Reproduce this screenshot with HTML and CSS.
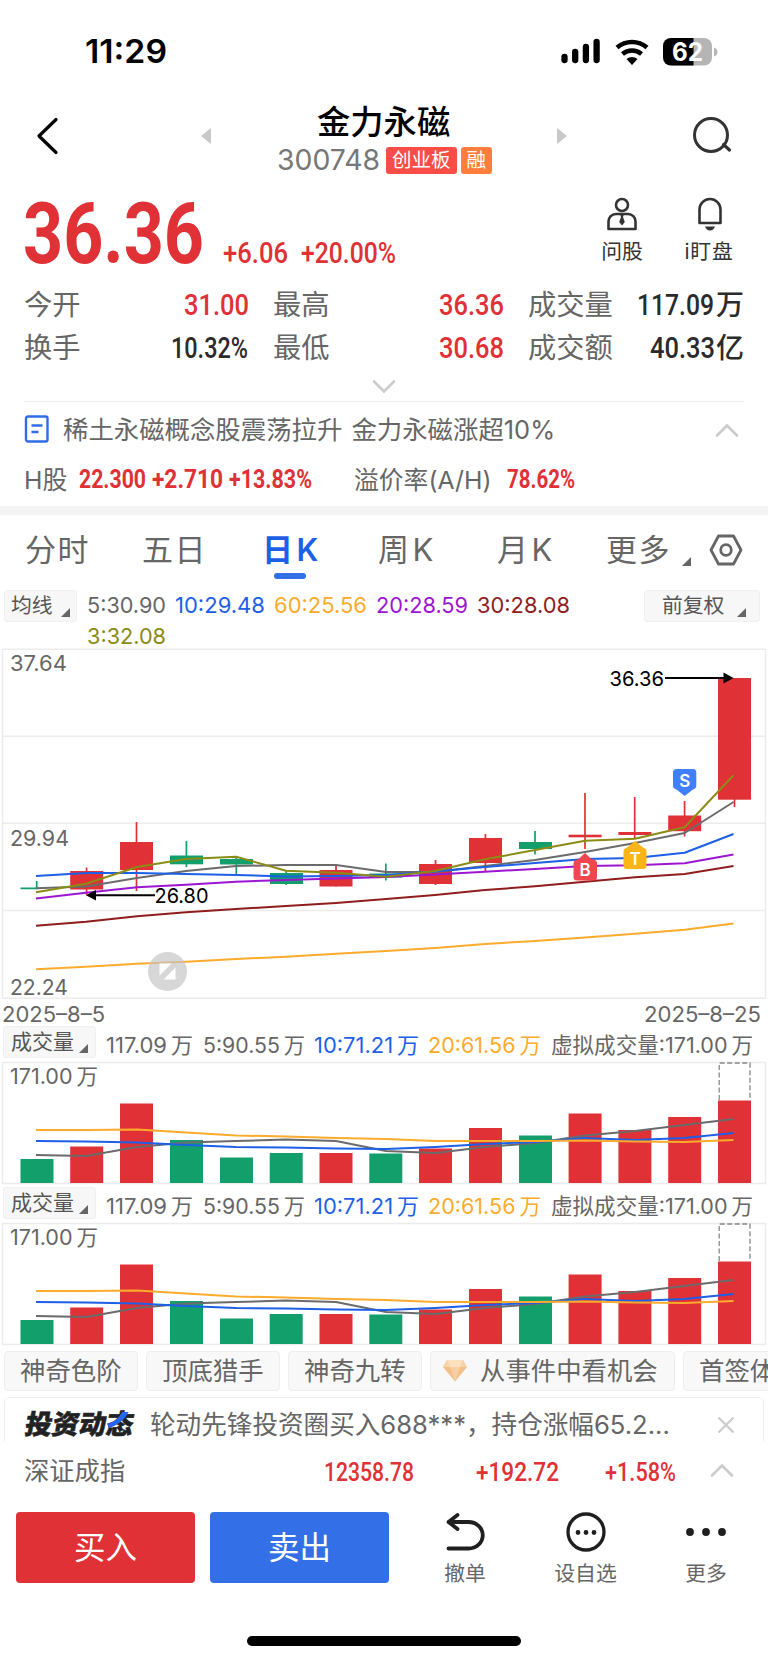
FILE: index.html
```html
<!DOCTYPE html>
<html lang="zh-CN">
<head>
<meta charset="utf-8">
<title>金力永磁 300748</title>
<link rel="stylesheet" href="styles.css">
</head>
<body>
<svg class="defs" width="0" height="0">
  <symbol id="tri" viewBox="0 0 9 9"><path d="M9 0V9H0Z" fill="#666"/></symbol>
  <symbol id="up" viewBox="0 0 24 13"><path d="M2 11.5 12 1.5 22 11.5" fill="none" stroke="#ccc" stroke-width="2.6" stroke-linecap="round"/></symbol>
  <symbol id="volume" viewBox="0 0 768 124" overflow="visible">
    <path d="M2.5 1.5H765.5V122.5H2.5Z" fill="none" stroke="#ececec" stroke-width="1.5"/>
    <g fill="#139f6c"><path d="M20.5 98h33v24h-33zM170 79h33v43h-33zM220 96.500h33v25.500h-33zM269.700 92h33v30h-33zM369.300 92.500h33v29.500h-33zM519 74.500h33v47.500h-33z"/></g>
    <g fill="#e03136"><path d="M70.200 85.500h33v36.500h-33zM120 42.500h33v79.500h-33zM319.500 92h33v30h-33zM419 87.500h33v34.500h-33zM469 67h33v55h-33zM568.600 52.500h33v69.500h-33zM618.400 69h33v53h-33zM668.200 56h33v66h-33zM718 39.500h33v82.500h-33z"/></g>
    <path d="M719.200 39V2H750V39" fill="none" stroke="#888" stroke-width="1.3" stroke-dasharray="5 2.500"/>
    <g fill="none" stroke-width="2" stroke-linejoin="round">
      <path stroke="#6b6b6b" d="M36 94 86 95 137 86 186 81.500 236 80 286 78.500 336 80 386 90 435.500 92 485 86 535 82 585 74.500 635 70 684 64 733.500 58"/>
      <path stroke="#1d5fe6" d="M36 80 86 80.500 137 81.500 186 84 236 86 286 86.500 336 87.500 386 88 435.500 86 485 83 535 81 585 77 635 79 684 77 733.500 72"/>
      <path stroke="#fcab2c" d="M36 69 86 69 137 68.500 186 71.500 236 74.500 286 75.500 336 77 386 78 435.500 80 485 80 535 80 585 79.500 635 80.500 684 81 733.500 79"/>
    </g>
  </symbol>
</svg>
<main class="app">
  <header class="status">
    <svg class="num inter w600 black" width="82" height="30"><text y="26" font-size="33" textLength="82" lengthAdjust="spacingAndGlyphs">11:29</text></svg>
    <svg class="status-icons" width="158" height="30" viewBox="0 0 158 30">
      <path d="M3.500 20v3M14.200 15v8M24.900 10v13M35.600 5v18" stroke="#000" stroke-width="6.300" stroke-linecap="round"/>
      <path d="M56 10.500a23 23 0 0 1 30 0M61.500 17a14.500 14.500 0 0 1 19 0" fill="none" stroke="#000" stroke-width="4.500"/>
      <path d="M65.500 22a8.500 8.500 0 0 1 11 0L71 28Z"/>
      <rect x="102" y="1" width="49" height="27.500" rx="8" fill="#b5b5b5"/>
      <path d="M110 1h22.500v27.500H110a8 8 0 0 1-8-8V9a8 8 0 0 1 8-8z"/>
      <path d="M153 10.500q3.500 1.500 3.500 4.500t-3.500 4.500z" fill="#b5b5b5"/>
      <text x="111" y="24" class="inter w700" fill="#fff" font-size="25" textLength="31" lengthAdjust="spacingAndGlyphs">62</text>
    </svg>
  </header>

  <nav class="titlebar">
    <svg class="back" width="24" height="40"><path d="M20 3.500 3 20 20 36.500" fill="none" stroke="#000" stroke-width="3.200" stroke-linecap="round" stroke-linejoin="round"/></svg>
    <svg class="prev" width="10" height="16"><path d="M10 0V16L0 8Z" fill="#c9c9c9"/></svg>
    <div class="title">
      <h1>金力永磁</h1>
      <div class="code-row">
        <svg class="num inter gray" width="103" height="27"><text y="24" font-size="28.500" textLength="103" lengthAdjust="spacingAndGlyphs">300748</text></svg>
        <span class="badge red-bg">创业板</span><span class="badge orange-bg">融</span>
      </div>
    </div>
    <svg class="next" width="10" height="16"><path d="M0 0V16L10 8Z" fill="#c9c9c9"/></svg>
    <svg class="search" width="42" height="40"><circle cx="19" cy="19" r="16.500" fill="none" stroke="#333" stroke-width="3"/><path d="M31.500 28.500 37.500 34" stroke="#333" stroke-width="3.200" stroke-linecap="round"/></svg>
  </nav>

  <section class="quote">
    <svg class="num din w700 price" width="180" height="64"><text y="63" font-size="85.500" textLength="181" lengthAdjust="spacingAndGlyphs">36.36</text></svg>
    <svg class="num din w500 change" width="64" height="24"><text y="23" font-size="29" textLength="65" lengthAdjust="spacingAndGlyphs">+6.06</text></svg>
    <svg class="num din w500 percent" width="94" height="24"><text y="23" font-size="29" textLength="95" lengthAdjust="spacingAndGlyphs">+20.00%</text></svg>
    <div class="tool ask">
      <svg width="32" height="34" viewBox="0 0 32 34"><g fill="none" stroke="#333" stroke-width="2.600"><circle cx="16" cy="8" r="6"/><path d="M10 17H22A7.500 7.500 0 0 1 29.500 24.500V32H2.500V24.500A7.500 7.500 0 0 1 10 17Z" stroke-linejoin="round"/></g><path d="M14 17h4l-1 3 1.800 5L16 28.500 13.200 25 15 20z" fill="#333"/></svg>
      <span>问股</span>
    </div>
    <div class="tool watch">
      <svg width="32" height="34" viewBox="0 0 32 34"><path d="M5.500 26V12.500a10.500 10.500 0 0 1 21 0V26Z" fill="none" stroke="#333" stroke-width="2.600" stroke-linejoin="round"/><path d="M11 29.500h10q-1.500 4-5 4t-5-4" fill="#333"/></svg>
      <span>i盯盘</span>
    </div>
  </section>

  <section class="stats">
    <span>今开</span><svg class="num din w500" width="64" height="24"><text y="20.500" font-size="29" textLength="65" lengthAdjust="spacingAndGlyphs">31.00</text></svg>
    <span>最高</span><svg class="num din w500" width="65" height="24"><text y="20.500" font-size="29" textLength="65" lengthAdjust="spacingAndGlyphs">36.36</text></svg>
    <span>成交量</span><b class="amount"><svg class="num din w500 dark" width="78" height="24"><text y="20.500" font-size="29" textLength="77" lengthAdjust="spacingAndGlyphs">117.09</text></svg>万</b>
    <span>换手</span><svg class="num din w500 dark" width="77" height="24"><text y="20.500" font-size="29" textLength="77" lengthAdjust="spacingAndGlyphs">10.32%</text></svg>
    <span>最低</span><svg class="num din w500" width="65" height="24"><text y="20.500" font-size="29" textLength="65" lengthAdjust="spacingAndGlyphs">30.68</text></svg>
    <span>成交额</span><b class="amount"><svg class="num din w500 dark" width="65" height="24"><text y="20.500" font-size="29" textLength="65" lengthAdjust="spacingAndGlyphs">40.33</text></svg>亿</b>
  </section>
  <div class="expand"><svg class="flip" width="24" height="13"><use href="#up"/></svg></div>

  <section class="news">
    <svg class="doc" width="26" height="28" viewBox="0 0 26 28"><rect x="2" y="1.500" width="21.500" height="25" rx="2" fill="none" stroke="#2f6ee8" stroke-width="2.400"/><path d="M7.500 10.500h11M7.500 17h7" stroke="#2f6ee8" stroke-width="2.400"/></svg>
    <span class="headline">稀土永磁概念股震荡拉升 金力永磁涨超10%</span>
    <svg width="24" height="13"><use href="#up"/></svg>
  </section>
  <section class="hshare">
    <span class="h-label">H股</span>
    <svg class="num din w700" width="67" height="24"><text y="22" font-size="25" textLength="67" lengthAdjust="spacingAndGlyphs">22.300</text></svg>
    <svg class="num din w700" width="71" height="24"><text y="22" font-size="25" textLength="71" lengthAdjust="spacingAndGlyphs">+2.710</text></svg>
    <svg class="num din w700" width="83" height="24"><text y="22" font-size="25" textLength="83" lengthAdjust="spacingAndGlyphs">+13.83%</text></svg>
    <span class="premium">溢价率(A/H)</span>
    <svg class="num din w700" width="68" height="24"><text y="22" font-size="25" textLength="68" lengthAdjust="spacingAndGlyphs">78.62%</text></svg>
  </section>
  <div class="band"></div>

  <nav class="tabs">
    <span>分时</span><span>五日</span><span class="active">日<i>K</i></span><span>周<i>K</i></span><span>月<i>K</i></span><span>更多</span>
    <svg class="more-tri" width="9" height="9"><use href="#tri"/></svg>
    <svg class="gear" width="34" height="32"><path d="M9.500 2H24.500L32 16 24.500 30H9.500L2 16Z" fill="none" stroke="#666" stroke-width="2.800" stroke-linejoin="round"/><circle cx="17" cy="16" r="5.300" fill="none" stroke="#666" stroke-width="2.800"/></svg>
  </nav>

  <section class="averages">
    <button class="pill ma">均线<svg width="9" height="9"><use href="#tri"/></svg></button>
    <div class="ma-values">
      <svg class="num inter" width="79" height="31"><text fill="#666" y="23" font-size="22" textLength="79" lengthAdjust="spacingAndGlyphs">5:30.90</text></svg>
      <svg class="num inter" width="90" height="31"><text fill="#1d5fe6" y="23" font-size="22" textLength="90" lengthAdjust="spacingAndGlyphs">10:29.48</text></svg>
      <svg class="num inter" width="93" height="31"><text fill="#fcab2c" y="23" font-size="22" textLength="93" lengthAdjust="spacingAndGlyphs">60:25.56</text></svg>
      <svg class="num inter" width="92" height="31"><text fill="#9c16d2" y="23" font-size="22" textLength="92" lengthAdjust="spacingAndGlyphs">20:28.59</text></svg>
      <svg class="num inter" width="93" height="31"><text fill="#8f1d1d" y="23" font-size="22" textLength="93" lengthAdjust="spacingAndGlyphs">30:28.08</text></svg>
      <svg class="num inter" width="79" height="31"><text fill="#8b8b16" y="23" font-size="22" textLength="79" lengthAdjust="spacingAndGlyphs">3:32.08</text></svg>
    </div>
    <button class="pill adjust">前复权<svg width="9" height="9"><use href="#tri"/></svg></button>
  </section>

  <svg class="kline" width="768" height="352" viewBox="0 648 768 352">
    <path d="M2.500 649.300H765.500V998.300H2.500ZM2.500 736.300H765.500M2.500 823.300H765.500M2.500 910.500H765.500" fill="none" stroke="#ececec" stroke-width="1.500"/>
    <g class="inter" font-size="21.500" fill="#666">
      <text x="10" y="671" textLength="57" lengthAdjust="spacingAndGlyphs">37.64</text>
      <text x="10" y="846" textLength="59" lengthAdjust="spacingAndGlyphs">29.94</text>
      <text x="10" y="995" textLength="58" lengthAdjust="spacingAndGlyphs">22.24</text>
    </g>
    <g fill="#139f6c" stroke="#139f6c" stroke-width="1.700">
      <path d="M20.500 888.300H37M36.700 881V889M186.400 841V867M236.300 857V875M286.200 871V885M385.800 863.500V880.500M535 831V854.500"/>
      <g stroke="none"><rect x="170" y="855.500" width="33" height="8.800"/><rect x="220" y="859" width="33" height="5.500"/><rect x="270" y="873" width="33" height="11"/><rect x="369.300" y="873.500" width="33" height="4"/><rect x="519" y="842" width="33" height="7"/></g>
    </g>
    <g fill="#e03136" stroke="#e03136" stroke-width="1.700">
      <path d="M86.600 867.500V895M136.500 822V891M336 866V886.500M435.500 860V885M485.400 834V871M585 793V849M634.700 797V838M684.600 801V836.500M734.500 790V807"/>
      <g stroke="none"><rect x="70.200" y="871" width="33" height="18.500"/><rect x="120" y="842" width="33" height="28"/><rect x="319.500" y="870" width="33" height="16.500"/><rect x="419" y="864" width="33" height="20"/><rect x="469" y="838" width="33" height="25"/><rect x="568.600" y="834.700" width="33" height="2.600"/><rect x="618.400" y="832" width="33" height="3"/><rect x="668.200" y="815.500" width="33" height="15.700"/><rect x="718" y="678" width="33" height="121.700"/></g>
    </g>
    <g fill="none" stroke-width="2" stroke-linejoin="round">
      <path stroke="#6b6b6b" d="M36 888.300 86 886.500 137 878 186 871 236 866 286 865 336 865 386 872 435 872 485 866 535 860 585 852 635 843 684.600 833 733.500 802"/>
      <path stroke="#1d5fe6" d="M36 876 86 873 137 873 186 874 236 875 286 876.500 336 876 386 875 435 871.500 485 867 535 863 585 859 635 858 684.600 852.700 733.500 834"/>
      <path stroke="#9c16d2" d="M36 898.500 86 892.700 137 887.300 186 884.700 236 881.700 286 880 336 878.500 386 877 435 874.500 485 871.700 535 869 585 866 635 865.300 684.600 863.300 733.500 854.500"/>
      <path stroke="#8f1d1d" d="M36 925.700 86 921.700 137 916.300 186 912.300 236 909 286 906 336 903 386 899 435 895 485 890 535 886.300 585 881.700 635 877.300 684.600 874 733.500 866"/>
      <path stroke="#fcab2c" d="M36 969.300 86 966.700 137 963.700 186 961.700 236 959 286 956.700 336 953.700 386 951 435 948 485 944 535 941 585 937.500 635 933.700 684.600 929.700 733.500 923.500"/>
      <path stroke="#8b8b16" d="M36 892.300 86 883.700 137 867 186 859 236 856.700 286 870.700 336 872.700 386 876.700 435 871 485 859.300 535 850 585 840.700 635 838.700 684.600 827.300 733.500 775.300"/>
    </g>
    <path d="M94 895.300H155M665 678H725" stroke="#000" stroke-width="2"/>
    <path d="M86 895.300 96 890V900.600ZM733.500 678 723.500 672.500V683.500Z"/>
    <g class="inter" font-size="20.500"><text x="154.500" y="902.500" textLength="54" lengthAdjust="spacingAndGlyphs">26.80</text><text x="609.500" y="685.700" textLength="54.500" lengthAdjust="spacingAndGlyphs">36.36</text></g>
    <circle cx="167.500" cy="971.500" r="19.500" fill="#c4c4c4" fill-opacity=".68"/>
    <path d="M159.500 963.500H171.500L159.500 975.500ZM175.500 979.500H163.500L175.500 967.500Z" fill="#fff"/>
    <path fill="#ef4650" d="M585 853 592 859.500H593.500Q597 860 597 863.500V877Q597 880.500 593.500 880.500H577Q573.500 880.500 573.500 877V863.500Q573.500 860 577 859.500H578Z"/>
    <path fill="#fbb516" d="M635 841 643 847.500Q646.500 848.500 646.500 851.500V865.500Q646.500 869 643 869H627Q623.500 869 623.500 865.500V851.500Q623.500 848.500 627 847.500Z"/>
    <path fill="#4080ff" d="M676.500 769H693Q696.300 769 696.300 772.500V785.500Q696.300 788.500 693 789.500L684.700 796 676.500 789.500Q673 788.500 673 785.500V772.500Q673 769 676.500 769Z"/>
    <g class="inter w600" font-size="17" fill="#fff" text-anchor="middle"><text x="585" y="875.500">B</text><text x="635" y="864.500">T</text><text x="684.700" y="787">S</text></g>
  </svg>
  <div class="dates">
    <svg class="num inter" width="103" height="24"><text y="22" font-size="21.500" fill="#666" textLength="103" lengthAdjust="spacingAndGlyphs">2025–8–5</text></svg>
    <svg class="num inter" width="117" height="24"><text y="22" font-size="21.500" fill="#666" textLength="117" lengthAdjust="spacingAndGlyphs">2025–8–25</text></svg>
  </div>

  <section class="volume">
    <div class="vol-head">
      <button class="pill">成交量<svg width="9" height="9"><use href="#tri"/></svg></button>
      <svg class="num inter" width="650" height="32" font-size="21.500" fill="#666"><text y="27" textLength="87" lengthAdjust="spacingAndGlyphs">117.09&#8201;万</text><text x="97" y="27" textLength="102" lengthAdjust="spacingAndGlyphs">5:90.55&#8201;万</text><text x="208" y="27" fill="#1d5fe6" textLength="105" lengthAdjust="spacingAndGlyphs">10:71.21&#8201;万</text><text x="322" y="27" fill="#fcab2c" textLength="113" lengthAdjust="spacingAndGlyphs">20:61.56&#8201;万</text><text x="445" y="27" textLength="202" lengthAdjust="spacingAndGlyphs">虚拟成交量:171.00&#8201;万</text></svg>
    </div>
    <svg class="plot" width="768" height="124"><use href="#volume" width="768" height="124"/><text x="10" y="23" class="inter" font-size="21.500" fill="#666" textLength="88" lengthAdjust="spacingAndGlyphs">171.00&#8201;万</text></svg>
  </section>
  <section class="volume second">
    <div class="vol-head">
      <button class="pill">成交量<svg width="9" height="9"><use href="#tri"/></svg></button>
      <svg class="num inter" width="650" height="32" font-size="21.500" fill="#666"><text y="27" textLength="87" lengthAdjust="spacingAndGlyphs">117.09&#8201;万</text><text x="97" y="27" textLength="102" lengthAdjust="spacingAndGlyphs">5:90.55&#8201;万</text><text x="208" y="27" fill="#1d5fe6" textLength="105" lengthAdjust="spacingAndGlyphs">10:71.21&#8201;万</text><text x="322" y="27" fill="#fcab2c" textLength="113" lengthAdjust="spacingAndGlyphs">20:61.56&#8201;万</text><text x="445" y="27" textLength="202" lengthAdjust="spacingAndGlyphs">虚拟成交量:171.00&#8201;万</text></svg>
    </div>
    <svg class="plot" width="768" height="124"><use href="#volume" width="768" height="124"/><text x="10" y="23" class="inter" font-size="21.500" fill="#666" textLength="88" lengthAdjust="spacingAndGlyphs">171.00&#8201;万</text></svg>
  </section>

  <section class="chips">
    <span class="chip">神奇色阶</span><span class="chip">顶底猎手</span><span class="chip">神奇九转</span>
    <span class="chip gem"><svg width="24" height="22" viewBox="0 0 24 22"><path d="M4 0H20L24 7 12 21.500 0 7Z" fill="#f3c08a"/><path d="M4 0 7 7H0ZM17 7 20 0 24 7Z" fill="#f7d3aa"/><path d="M4 0H20L17 7H7Z" fill="#fbe0c0"/><path d="M7 7H17L12 21.500Z" fill="#f7cfa2"/></svg>从事件中看机会</span>
    <span class="chip last">首签体验</span>
  </section>
  <section class="feed">
    <div class="feed-card">
      <span class="brand">投资动态<svg width="24" height="18" viewBox="0 0 24 18"><path d="M15 1H21.500Q15.500 13 1 17V12.500Q10 10.500 15 1Z" fill="#2468f2"/></svg></span>
      <span class="feed-text">轮动先锋投资圈买入688***，持仓涨幅65.2...</span>
      <svg class="close" width="18" height="18"><path d="M1.500 1.500 16.500 16.500M16.500 1.500 1.500 16.500" stroke="#ccc" stroke-width="2.200"/></svg>
    </div>
  </section>
  <section class="index">
    <span>深证成指</span>
    <svg class="num din w500 i1" width="90" height="24"><text y="21" font-size="25.500" textLength="90" lengthAdjust="spacingAndGlyphs">12358.78</text></svg>
    <svg class="num din w500 i2" width="83" height="24"><text y="21" font-size="25.500" textLength="83" lengthAdjust="spacingAndGlyphs">+192.72</text></svg>
    <svg class="num din w500 i3" width="71" height="24"><text y="21" font-size="25.500" textLength="71" lengthAdjust="spacingAndGlyphs">+1.58%</text></svg>
    <svg class="i4" width="24" height="13"><use href="#up"/></svg>
  </section>

  <footer class="actions">
    <button class="trade buy">买入</button><button class="trade sell">卖出</button>
    <div class="act"><svg width="42" height="40" viewBox="0 0 42 40"><path d="M13.500 3 4.500 10 13.500 17M4.500 10H24.500A14 13 0 0 1 24.500 36.500H4.500" fill="none" stroke="#1f1f1f" stroke-width="3.800" stroke-linecap="round" stroke-linejoin="round"/></svg><span>撤单</span></div>
    <div class="act"><svg width="42" height="40" viewBox="0 0 42 40"><circle cx="21" cy="20" r="18" fill="none" stroke="#1f1f1f" stroke-width="3.300"/><path d="M13 20.500h.01M21 20.500h.01M29 20.500h.01" stroke="#1f1f1f" stroke-width="4.800" stroke-linecap="round"/></svg><span>设自选</span></div>
    <div class="act"><svg width="42" height="40" viewBox="0 0 42 40"><path d="M5 20h.01M21 20h.01M37 20h.01" stroke="#1f1f1f" stroke-width="7.800" stroke-linecap="round"/></svg><span>更多</span></div>
  </footer>
  <div class="home"></div>
</main>
</body>
</html>
```
FILE: styles.css
```css
* { box-sizing: border-box; }
body { margin: 0; background: #fff; color: #666; font-family: Inter, "Noto Sans CJK SC", sans-serif; }
.app { width: 768px; height: 1663px; overflow: hidden; display: flex; flex-direction: column; }
.app > * { flex: none; }
svg { display: block; flex: none; }
.defs { position: absolute; }
h1, button, b { margin: 0; padding: 0; border: 0; font: inherit; }
.num { overflow: visible; }
.inter { font-family: Inter, "Noto Sans CJK SC", sans-serif; }
.din { font-family: Roboto, sans-serif; fill: #e03136; }
.dark { fill: #2b2b2b; }
.black { fill: #000; }
.gray { fill: #777; }
.w500 { font-weight: 500; }
.w600 { font-weight: 600; }
.w700 { font-weight: 700; }

.status { height: 97px; padding: 37px 49px 0 85px; display: flex; justify-content: space-between; align-items: flex-start; }
.status-icons { margin-right: 0; }

.titlebar { height: 91px; display: flex; align-items: flex-start; }
.back { margin: 19px 0 0 36px; }
.prev { margin: 31px 0 0 141px; }
.title { width: 214px; margin: 5px 0 0 66px; color: #000; }
h1 { height: 40px; margin: 0 0 4px 40px; font-size: 33.3px; line-height: 40px; font-weight: 500; white-space: nowrap; }
.code-row { display: flex; align-items: center; height: 27px; }
.badge { height: 27px; padding: 0 6px; margin-top: 1px; border-radius: 3px; color: #fff; font-size: 19.5px; line-height: 27px; white-space: nowrap; }
.red-bg { width: 71px; margin-left: 6px; background: #fa4d47; }
.orange-bg { width: 31px; margin-left: 4px; background: #ff7e3e; }
.next { margin: 31px 0 0 66px; }
.search { margin: 19px 0 0 125px; }

.quote { height: 90px; display: flex; align-items: flex-start; padding-left: 23px; }
.price { margin-top: 12px; }
.change { margin: 52px 0 0 20px; }
.percent { margin: 52px 0 0 14px; }
.tool { display: flex; flex-direction: column; align-items: center; color: #333; font-size: 20.8px; line-height: 26px; margin-top: 9px; white-space: nowrap; }
.tool span { margin-top: 8px; }
.ask { width: 60px; margin-left: 197px; }
.watch { width: 60px; margin-left: 28px; }
.watch span { letter-spacing: .8px; margin-left: -2px; }

.stats { height: 102px; padding: 6px 24px 0 24px; display: grid; grid-template-columns: 85px 139px 85px 170px 101px 140px; grid-auto-rows: 43px; align-items: center; font-size: 28.3px; line-height: 43px; white-space: nowrap; }
.stats > svg { justify-self: end; }
.stats > span:nth-child(6n+3) { padding-left: 25px; margin-right: -30px; }
.stats > span:nth-child(6n+5) { padding-left: 25px; }
.stats > svg:nth-child(6n+4) { margin-right: -1px; }
.amount { display: flex; align-items: center; justify-content: flex-end; color: #2b2b2b; font-weight: 500; gap: 1px; font-size: 28px; }
.expand { height: 21px; display: flex; justify-content: center; }
.flip { transform: rotate(180deg); }

.news { height: 58px; margin: 0 24px; padding-right: 5px; border-top: 1.5px solid #ededed; display: flex; align-items: center; justify-content: space-between; }
.doc { margin-bottom: 3px; }
.headline { flex: 1; margin: 0 0 6px 13px; font-size: 25.4px; white-space: nowrap; word-spacing: 2px; }
.hshare { height: 47px; padding: 0 0 9px 24px; display: flex; align-items: center; font-size: 24.8px; white-space: nowrap; gap: 6px; }
.h-label { width: 49px; }
.premium { width: 147px; margin-left: 36px; }
.band { height: 9px; background: #f4f4f4; }

.tabs { height: 75px; padding-left: 25px; display: flex; align-items: flex-start; font-size: 31px; line-height: 40px; white-space: nowrap; }
.tabs span { margin-top: 15px; letter-spacing: 1.5px; }
.tabs i { font-style: normal; margin-left: 2px; }
.tabs span:nth-child(1) { width: 117px; }
.tabs span:nth-child(2) { width: 120px; }
.tabs span:nth-child(4) { width: 119px; }
.tabs span:nth-child(5) { width: 109px; }
.tabs span:nth-child(6) { width: 76px; }
.tabs .active { color: #1d5fe6; font-weight: 600; width: 116px; }
.tabs .active::after { content: ""; display: block; width: 32px; height: 6px; margin: 3px 0 0 12px; border-radius: 3px; background: #3370e8; }
.more-tri { margin: 42px 0 0 0; }
.gear { margin: 19px 0 0 18px; }

.pill { display: flex; justify-content: space-between; align-items: center; height: 32px; border: 1px solid #f0f0f0; border-radius: 3px; background: #f7f7f7; color: #555; font-size: 20.8px; line-height: 30px; white-space: nowrap; }
.pill svg { margin-top: 12px; }
.averages { height: 58px; padding: 0 8px 0 4px; display: flex; align-items: flex-start; }
.ma { width: 73px; padding: 0 6px 0 6px; }
.ma-values { width: 500px; margin-left: 10px; display: flex; flex-wrap: wrap; column-gap: 9px; }
.adjust { width: 116px; margin-left: auto; padding: 0 13px 0 17px; }

.dates { height: 26px; padding: 0 7px 0 2px; display: flex; justify-content: space-between; }
.volume { height: 161px; }
.vol-head { height: 35px; display: flex; gap: 10px; padding-left: 3px; }
.vol-head .pill { width: 93px; padding: 0 7px 0 7px; font-size: 21px; }
.plot { overflow: visible; }

.chips { height: 49px; padding: 3px 0 0 4px; display: flex; gap: 8px; overflow: hidden; }
.chip { flex: none; width: 134px; height: 40px; padding-left: 15px; border: 1px solid #eee; border-radius: 4px; background: #f8f8f8; font-size: 25.4px; line-height: 38px; white-space: nowrap; }
.gem { width: 245px; display: flex; align-items: center; gap: 13px; padding-left: 12px; }
.feed { height: 44px; padding: 0 4px; overflow: hidden; }
.feed-card { height: 60px; border: 1.5px solid #eee; border-radius: 5px; display: flex; align-items: flex-start; padding: 9px 28px 0 19px; line-height: 36px; }
.brand { position: relative; width: 126px; color: #222; font-size: 27px; font-weight: 900; -webkit-text-stroke: .5px #222; transform: skewX(-10deg); transform-origin: 0 70%; white-space: nowrap; }
.brand svg { position: absolute; left: 81px; top: 4px; transform: skewX(10deg); }
.feed-text { font-size: 25.6px; white-space: nowrap; }
.close { margin: 9px 0 0 auto; }
.index { height: 71px; padding-left: 24px; display: flex; align-items: flex-start; font-size: 25.3px; line-height: 60px; }
.index > span { width: 300px; }
.index svg { margin-top: 19px; }
.index .i2 { margin-left: 62px; }
.index .i3 { margin-left: 46px; }
.index .i4 { margin: 23px 0 0 34px; }

.actions { height: 124px; display: flex; padding-left: 16px; }
.trade { width: 179px; height: 71px; margin-right: 15px; border-radius: 4px; color: #fff; font-size: 31.5px; line-height: 72px; }
.buy { background: #e03136; }
.sell { background: #3370e8; }
.act { width: 60px; margin-left: 31px; display: flex; flex-direction: column; align-items: center; font-size: 20.8px; line-height: 26px; white-space: nowrap; }
.act + .act { margin-left: 60.5px; }
.act span { margin-top: 9px; }
.home { width: 274px; height: 10px; margin: 0 auto; border-radius: 5px; background: #000; }
```
